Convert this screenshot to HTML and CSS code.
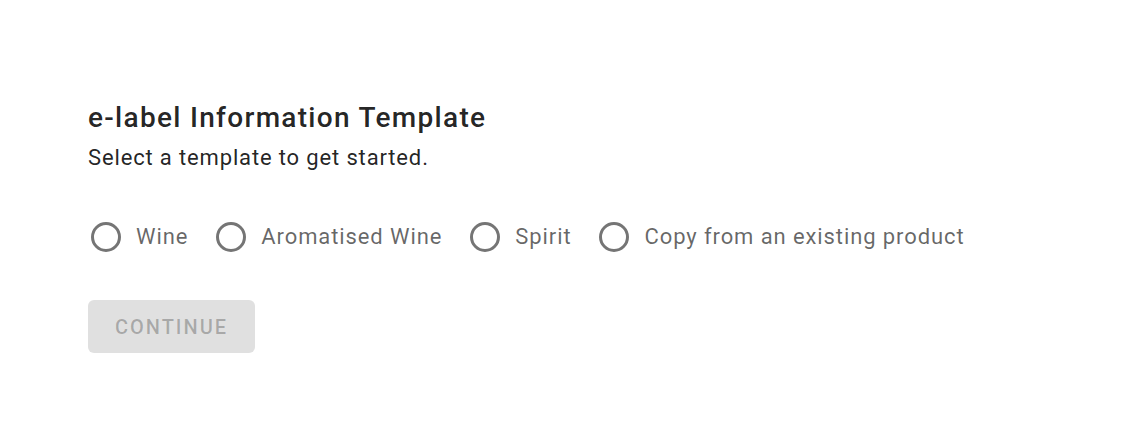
FILE: index.html
```html
<!DOCTYPE html>
<html>
<head>
<meta charset="utf-8">
<link rel="stylesheet" href="styles.css">
</head>
<body>
<main class="page">
  <h1 class="title">e-label Information Template</h1>
  <p class="subtitle">Select a template to get started.</p>
  <div class="options">
    <label class="option"><span class="radio"></span><span class="label">Wine</span></label>
    <label class="option"><span class="radio"></span><span class="label">Aromatised Wine</span></label>
    <label class="option"><span class="radio"></span><span class="label">Spirit</span></label>
    <label class="option"><span class="radio"></span><span class="label">Copy from an existing product</span></label>
  </div>
  <button class="continue" disabled>CONTINUE</button>
</main>
</body>
</html>
```
FILE: styles.css
```css
html, body {
  margin: 0;
  padding: 0;
  background: #ffffff;
  font-family: Roboto, "Liberation Sans", sans-serif;
}
.page {
  padding: 101px 88px 0 88px;
  display: flex;
  flex-direction: column;
  align-items: flex-start;
}
.title {
  margin: 0;
  font-size: 28px;
  font-weight: 500;
  color: rgba(0,0,0,0.87);
  line-height: 34px;
  letter-spacing: 1.3px;
}
.subtitle {
  margin: 8px 0 0 0;
  font-size: 22px;
  line-height: 30px;
  letter-spacing: 0.85px;
  color: rgba(0,0,0,0.87);
}
.options {
  display: flex;
  align-items: center;
  margin-top: 47px;
  gap: 25px;
}
.option {
  display: flex;
  align-items: center;
  gap: 15px;
  color: rgba(0,0,0,0.6);
  font-size: 22px;
  line-height: 34px;
  letter-spacing: 0.9px;
}
.radio {
  box-sizing: content-box;
  width: 24px;
  height: 24px;
  border: 3px solid #757575;
  border-radius: 50%;
  margin-left: 3px;
}
.continue {
  margin-top: 46px;
  width: 167px;
  height: 53px;
  border: none;
  border-radius: 6px;
  background: #e0e0e0;
  color: rgba(0,0,0,0.26);
  font-family: Roboto, "Liberation Sans", sans-serif;
  font-weight: 500;
  font-size: 20px;
  letter-spacing: 2px;
  padding: 0;
}
```
